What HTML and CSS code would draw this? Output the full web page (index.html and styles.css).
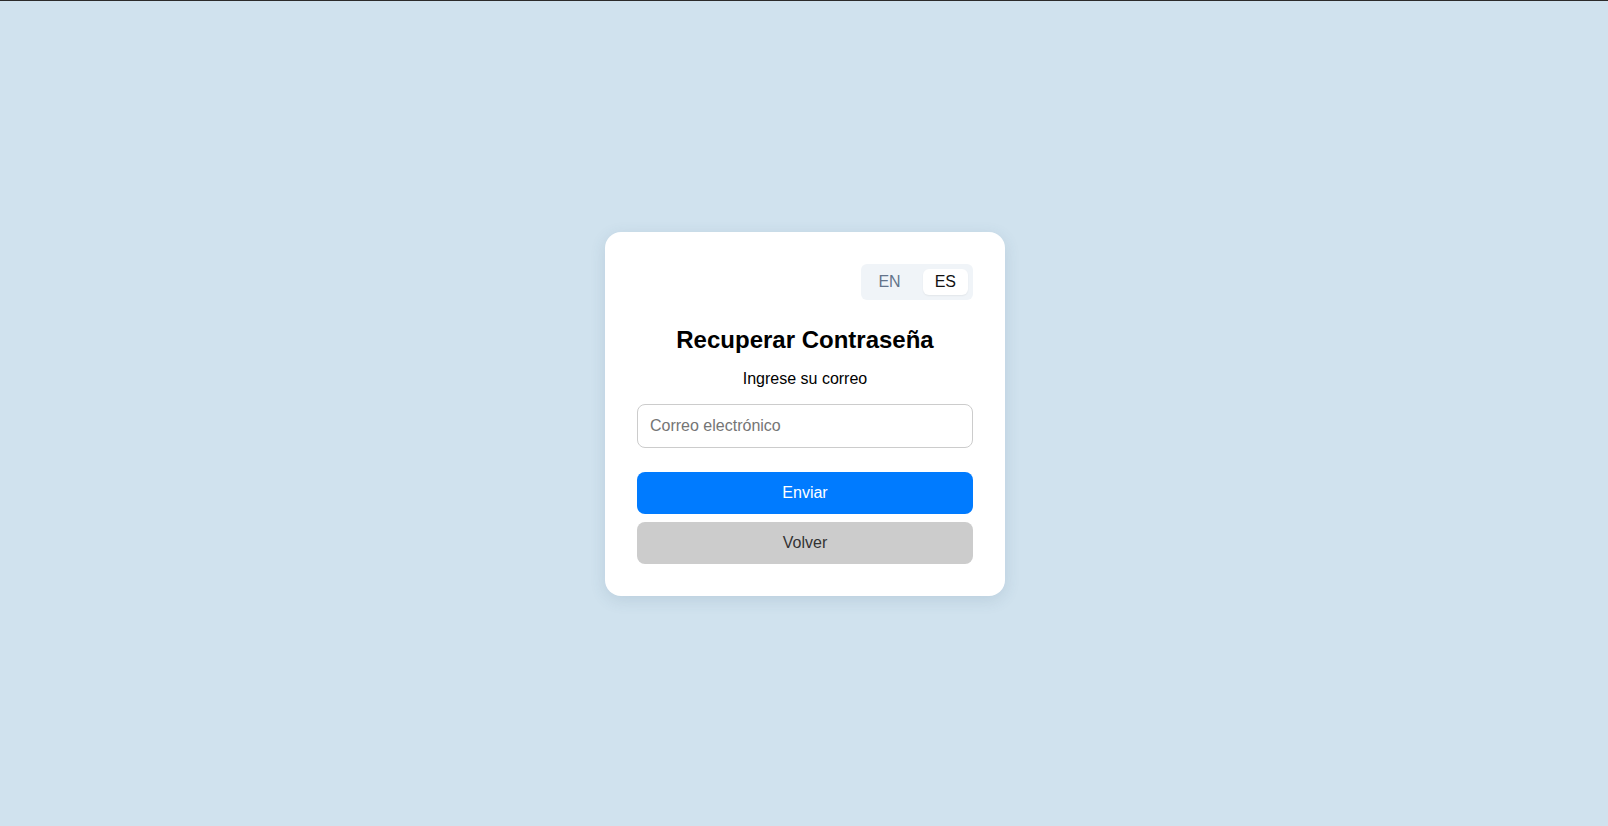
FILE: index.html
```html
<!DOCTYPE html>
<html lang="es">
<head>
<meta charset="utf-8">
<title>Recuperar Contraseña</title>
<link rel="stylesheet" href="styles.css">
</head>
<body>
  <main class="card">
    <div class="lang-row">
      <div class="lang-toggle">
        <button class="lang-btn" type="button">EN</button>
        <button class="lang-btn active" type="button">ES</button>
      </div>
    </div>
    <h2 class="title">Recuperar Contraseña</h2>
    <p class="subtitle">Ingrese su correo</p>
    <input class="field" type="email" placeholder="Correo electrónico">
    <button class="btn btn-primary" type="button">Enviar</button>
    <button class="btn btn-secondary" type="button">Volver</button>
  </main>
</body>
</html>
```

FILE: styles.css
```css
* {
  box-sizing: border-box;
}

html, body {
  margin: 0;
  padding: 0;
}

body {
  height: 100vh;
  border-top: 1px solid #2b2b2b;
  padding-left: 2px;
  background: #d0e2ee;
  font-family: "Liberation Sans", Arial, sans-serif;
  display: flex;
  align-items: center;
  justify-content: center;
}

.card {
  width: 400px;
  background: #ffffff;
  border-radius: 16px;
  padding: 32px;
  box-shadow: 0 4px 16px rgba(60, 90, 120, 0.14);
  display: flex;
  flex-direction: column;
}

.lang-row {
  display: flex;
  justify-content: flex-end;
}

.lang-toggle {
  display: flex;
  align-items: center;
  gap: 10px;
  height: 36px;
  padding: 0 5px;
  background: #f0f4f8;
  border-radius: 6px;
}

.lang-btn {
  font-family: "Liberation Sans", Arial, sans-serif;
  font-size: 16px;
  line-height: 18px;
  padding: 4px 12px;
  border: none;
  background: transparent;
  color: #64748b;
  border-radius: 6px;
  cursor: pointer;
}

.lang-btn.active {
  background: #ffffff;
  color: #111111;
  box-shadow: 0 1px 2px rgba(0, 0, 0, 0.06);
}

.title {
  margin: 26px 0 16px;
  font-size: 24px;
  font-weight: bold;
  text-align: center;
  color: #000;
}

.subtitle {
  margin: 0 0 16px;
  font-size: 16px;
  text-align: center;
  color: #000;
}

.field {
  width: 100%;
  height: 44px;
  padding: 0 12px;
  border: 1px solid #cccccc;
  border-radius: 8px;
  font-family: "Liberation Sans", Arial, sans-serif;
  font-size: 16px;
  color: #222;
  margin-bottom: 24px;
}

.field::placeholder {
  color: #757575;
}

.btn {
  width: 100%;
  height: 42px;
  border: none;
  border-radius: 8px;
  font-family: "Liberation Sans", Arial, sans-serif;
  font-size: 16px;
  cursor: pointer;
}

.btn-primary {
  background: #007bff;
  color: #ffffff;
  margin-bottom: 8px;
}

.btn-secondary {
  background: #cccccc;
  color: #333333;
}
```
